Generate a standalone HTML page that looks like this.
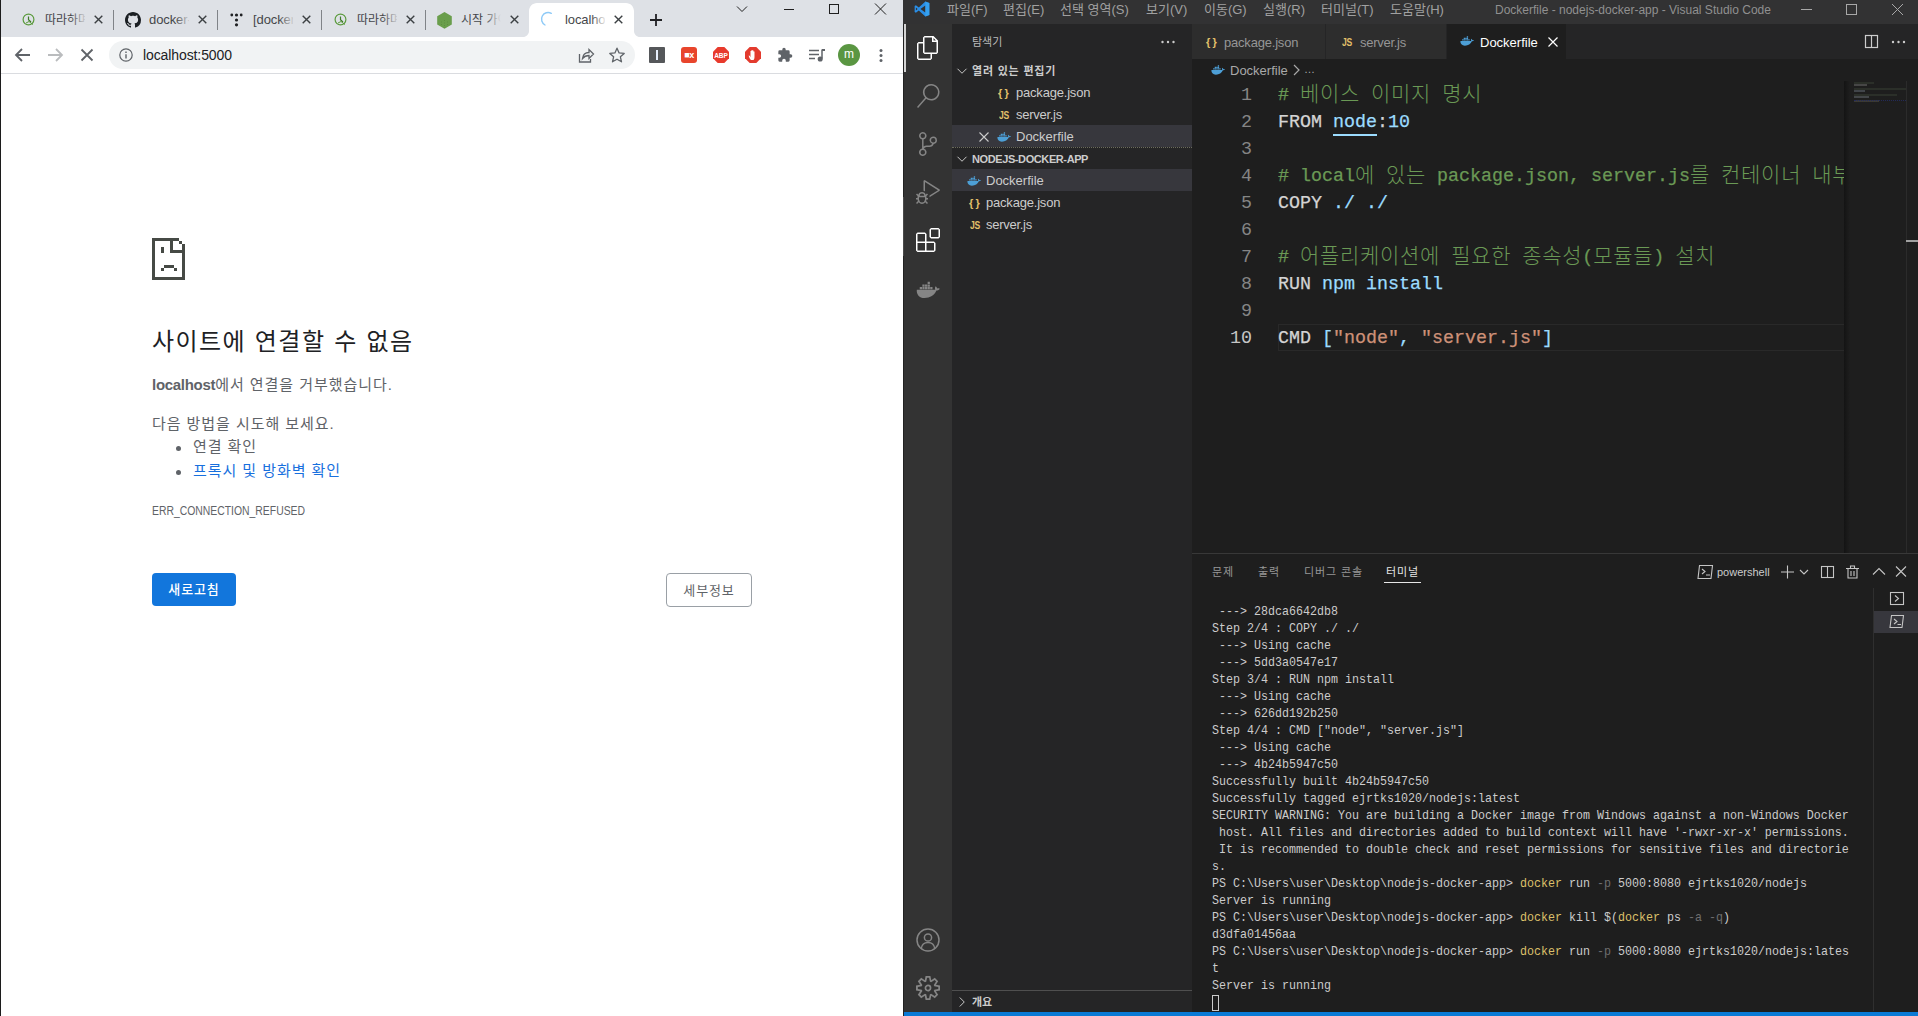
<!DOCTYPE html>
<html lang="ko">
<head>
<meta charset="utf-8">
<title>localhost</title>
<style>
*{box-sizing:border-box;margin:0;padding:0}
html,body{width:1918px;height:1016px;overflow:hidden;background:#fff}
body{position:relative;font-family:"Liberation Sans","Noto Sans CJK KR",sans-serif;font-size:13px;color:#202124}
.abs{position:absolute}
.nw{white-space:nowrap}
/* ---------- chrome ---------- */
#chrome{position:absolute;left:0;top:0;width:903px;height:1016px;background:#fff;overflow:hidden}
#chrome .edge{position:absolute;left:0;top:0;width:1px;height:1016px;background:#1c1c1c;z-index:9}
#tabstrip{position:absolute;left:0;top:0;width:903px;height:37px;background:#dee1e6}
.tab{position:absolute;top:0;height:37px;font-size:12px;color:#3c4043}
.tab .tt{position:absolute;top:12px;left:0;white-space:nowrap;overflow:hidden;height:18px;line-height:16px;color:#45474a}
.tab .fade{position:absolute;top:8px;width:16px;height:22px;background:linear-gradient(90deg,rgba(222,225,230,0),#dee1e6)}
.tsep{position:absolute;top:10px;width:1px;height:20px;background:#808388}
#acttab{position:absolute;left:527px;top:4px;width:109px;height:33px;background:#fff;border-radius:8px 8px 0 0}
#toolbar{position:absolute;left:0;top:37px;width:903px;height:37px;background:#fff;border-bottom:1px solid #dadce0}
#omni{position:absolute;left:109px;top:4px;width:526px;height:28px;border-radius:14px;background:#f1f3f4}
#omni .url{position:absolute;left:34px;top:5px;font-size:14px;line-height:18px;color:#202124;letter-spacing:-0.1px}
#page{position:absolute;left:0;top:74px;width:903px;height:942px;background:#fff;color:#5f6368}
/* ---------- vscode ---------- */
#vsc{position:absolute;left:903px;top:0;width:1015px;height:1016px;background:#222;overflow:hidden;color:#ccc;font-family:"Liberation Sans","Noto Sans CJK KR",sans-serif}
#titlebar{position:absolute;left:0;top:0;width:1015px;height:24px;background:#323233}
#actbar{position:absolute;left:1px;top:24px;width:48px;height:988px;background:#333333}
#sidebar{position:absolute;left:49px;top:24px;width:240px;height:988px;background:#252526}
#editor{position:absolute;left:289px;top:24px;width:726px;height:988px;background:#1e1e1e}
#status{position:absolute;left:1px;top:1012px;width:1014px;height:4px;background:#0a7ad6}

/* vscode detail */
#vsc .menu{position:absolute;top:0;height:23px;line-height:17px;font-size:13px;color:#a0a0a0;white-space:nowrap}
#vsc .wtitle{position:absolute;top:3px;left:592px;font-size:12px;line-height:14px;color:#909090;white-space:nowrap}
.ai{position:absolute;left:12px;width:24px;height:24px;fill:#858585}
.row{position:absolute;left:0;width:240px;height:22px;line-height:24px;font-size:13px;color:#ccc;white-space:nowrap}
.row.sel{background:#37373d}
.row span{position:absolute;top:0}
.ic{position:absolute;font-weight:bold;color:#e2c06a;font-family:"Liberation Sans",sans-serif}
.sech{position:absolute;left:0;width:240px;height:22px;line-height:22px;font-size:11px;font-weight:bold;color:#ccc;white-space:nowrap}
.etab{position:absolute;top:0;height:35px;background:#2d2d2d;font-size:13px;line-height:37px;color:#969696;white-space:nowrap;border-right:1px solid #252526}
.etab span{position:absolute;top:0}
.ln{position:absolute;left:0;width:60px;text-align:right;font:18.333px/27px "Liberation Mono",monospace;color:#858585}
.cl{position:absolute;left:86px;height:27px;white-space:pre;font:18.333px/27px "Liberation Mono","Noto Sans CJK KR",monospace;color:#d4d4d4;-webkit-text-stroke:.25px currentColor}
.cl .k{-webkit-text-stroke:0}
.cl .k{font-family:"Noto Sans CJK KR",sans-serif;font-weight:300;font-size:20px;letter-spacing:.7px;font-size:21px;line-height:10px;position:relative;top:1px}
.cm{color:#6a9955}.bl{color:#9cdcfe}.st{color:#ce9178}
.ptab{position:absolute;top:0;font-size:11px;line-height:37px;color:#969696;white-space:nowrap;letter-spacing:.9px}
#term{position:absolute;left:20px;top:49px;width:760px;font:13.333px/17px "Liberation Mono",monospace;color:#ccc;white-space:pre;transform:scaleX(.875);transform-origin:0 0}
#term .y{color:#e5c07b;color:#dcc06a}
#term .g{color:#6e6e6e}
</style>
</head>
<body>
<div id="chrome">
  <div class="edge"></div>
  <div id="tabstrip">
<svg class="abs" style="left:22px;top:13px" width="14" height="14" viewBox="0 0 14 14" fill="none" stroke="#5a9a3c" stroke-width="1.200"><circle cx="6.500" cy="6.500" r="5.400"/><path d="M6.500 3.500v3.300l2.500 2.200" stroke="#3f7a2a"/><path d="M4 10l3-1.500 4 3" stroke-width="1"/></svg>
<div class="tab" style="left:45px;width:42px"><span class="tt" style="width:40px">따라하며 배우는</span><div class="fade" style="left:26px"></div></div>
<svg class="abs" style="left:93.5px;top:15px" width="9" height="9" viewBox="0 0 9 9" stroke="#3c4043" stroke-width="1.400" fill="none"><path d="M.7.7l7.600 7.600M8.300.7L.7 8.300"/></svg>
<div class="tsep" style="left:113px"></div>
<svg class="abs" style="left:125px;top:12px" width="16" height="16" viewBox="0 0 16 16"><path fill="#1b1f23" fill-rule="evenodd" d="M8 0C3.580 0 0 3.580 0 8c0 3.540 2.290 6.530 5.470 7.590.4.070.55-.17.55-.38 0-.19-.010-.82-.010-1.490-2.010.37-2.530-.49-2.690-.94-.09-.23-.48-.94-.82-1.130-.28-.15-.68-.52-.010-.53.63-.010 1.080.58 1.230.82.720 1.210 1.870.87 2.330.66.070-.52.280-.87.510-1.070-1.780-.2-3.640-.89-3.640-3.950 0-.87.310-1.590.82-2.150-.08-.2-.36-1.020.08-2.120 0 0 .67-.21 2.200.82.640-.18 1.320-.27 2-.27s1.360.09 2 .27c1.530-1.040 2.200-.82 2.200-.82.440 1.100.16 1.920.08 2.120.51.560.82 1.270.82 2.150 0 3.070-1.870 3.750-3.650 3.950.29.250.54.730.54 1.480 0 1.070-.010 1.930-.010 2.200 0 .21.150.46.550.38A8.013 8.013 0 0 0 16 8c0-4.420-3.580-8-8-8z"/></svg>
<div class="tab" style="left:149px;width:42px"><span class="tt" style="width:40px;font-size:13px;letter-spacing:-.1px">docker-node</span><div class="fade" style="left:26px"></div></div>
<svg class="abs" style="left:197.5px;top:15px" width="9" height="9" viewBox="0 0 9 9" stroke="#3c4043" stroke-width="1.400" fill="none"><path d="M.7.7l7.600 7.600M8.300.7L.7 8.300"/></svg>
<div class="tsep" style="left:217px"></div>
<svg class="abs" style="left:230px;top:13px" width="13" height="14" viewBox="0 0 13 14" fill="#202124"><circle cx="1.800" cy="2" r="1.400"/><circle cx="6.500" cy="2" r="1.600"/><circle cx="11.200" cy="2" r="1.400"/><circle cx="6.500" cy="7" r="1.600"/><circle cx="6.500" cy="11.800" r="1.600"/></svg>
<div class="tab" style="left:253px;width:42px"><span class="tt" style="width:40px;font-size:13px;letter-spacing:-.1px">[docker] 도커</span><div class="fade" style="left:26px"></div></div>
<svg class="abs" style="left:301.5px;top:15px" width="9" height="9" viewBox="0 0 9 9" stroke="#3c4043" stroke-width="1.400" fill="none"><path d="M.7.7l7.600 7.600M8.300.7L.7 8.300"/></svg>
<div class="tsep" style="left:321px"></div>
<svg class="abs" style="left:334px;top:13px" width="14" height="14" viewBox="0 0 14 14" fill="none" stroke="#5a9a3c" stroke-width="1.200"><circle cx="6.500" cy="6.500" r="5.400"/><path d="M6.500 3.500v3.300l2.500 2.200" stroke="#3f7a2a"/><path d="M4 10l3-1.500 4 3" stroke-width="1"/></svg>
<div class="tab" style="left:357px;width:42px"><span class="tt" style="width:40px">따라하며 배우는</span><div class="fade" style="left:26px"></div></div>
<svg class="abs" style="left:405.5px;top:15px" width="9" height="9" viewBox="0 0 9 9" stroke="#3c4043" stroke-width="1.400" fill="none"><path d="M.7.7l7.600 7.600M8.300.7L.7 8.300"/></svg>
<div class="tsep" style="left:425px"></div>
<svg class="abs" style="left:437px;top:11.500px" width="15" height="17" viewBox="0 0 15 17"><path d="M7.500 0l7.300 4.200v8.400L7.500 16.800.2 12.600V4.200z" fill="#6a9e4c"/><path d="M7.500 8v8M4.500 9.500v5M10.500 9.500v5" stroke="#5a8a40" stroke-width=".8" stroke-dasharray="1 1.500"/></svg>
<div class="tab" style="left:461px;width:42px"><span class="tt" style="width:40px">시작 가이드</span><div class="fade" style="left:24px"></div></div>
<svg class="abs" style="left:509.5px;top:15px" width="9" height="9" viewBox="0 0 9 9" stroke="#3c4043" stroke-width="1.400" fill="none"><path d="M.7.7l7.600 7.600M8.300.7L.7 8.300"/></svg>
<svg class="abs" style="left:523px;top:3px" width="117" height="34" viewBox="0 0 117 34"><path d="M0 34c3.300 0 6-2.700 6-6V8c0-4.400 3.600-8 8-8h89c4.400 0 8 3.600 8 8v20c0 3.300 2.700 6 6 6z" fill="#fff"/></svg>
<svg class="abs" style="left:540px;top:11px" width="16" height="16" viewBox="0 0 16 16" fill="none" stroke="#8ecaf7" stroke-width="1.400" stroke-linecap="round"><path d="M5 14A6.600 6.600 0 0 1 11.300 2.300"/></svg>
<div class="tab" style="left:565px;width:42px"><span class="tt" style="width:40px;font-size:13px;letter-spacing:-.1px">localhost</span><div class="fade" style="left:26px;background:linear-gradient(90deg,rgba(255,255,255,0),#fff)"></div></div>
<svg class="abs" style="left:613.5px;top:15px" width="9" height="9" viewBox="0 0 9 9" stroke="#3c4043" stroke-width="1.400" fill="none"><path d="M.7.7l7.600 7.600M8.300.7L.7 8.300"/></svg>
<svg class="abs" style="left:650px;top:14px" width="12" height="12" viewBox="0 0 12 12" stroke="#202124" stroke-width="1.800" fill="none"><path d="M6 0v12M0 6h12"/></svg>
<svg class="abs" style="left:730px;top:0" width="170" height="20" viewBox="0 0 170 20" fill="none" stroke="#1f1f1f" stroke-width="1"><path d="M7 6.500l5 5 5-5"/><path d="M54 9.500h10"/><rect x="99.500" y="4.500" width="9" height="9"/><path d="M145 3.500l11 11M156 3.500l-11 11"/></svg>
</div>
  <div id="toolbar">
<svg class="abs" style="left:14px;top:10px" width="90" height="16" viewBox="0 0 90 16" fill="none" stroke="#5f6368" stroke-width="1.800"><path d="M16 8H2.500M8 2L2 8l6 6"/><path d="M34 8h13.500M42 2l6 6-6 6" stroke="#babcbe"/><path d="M67.500 2.500l11 11M78.500 2.500l-11 11"/></svg>
<div id="omni"><svg class="abs" style="left:10px;top:7px" width="14" height="14" viewBox="0 0 14 14" fill="none" stroke="#5f6368" stroke-width="1.200"><circle cx="7" cy="7" r="6.200"/><path d="M7 6.200v4.300M7 3.500v1.400" stroke-width="1.400"/></svg>
<span class="url nw">localhost:5000</span>
<svg class="abs" style="left:468px;top:5px" width="50" height="18" viewBox="0 0 50 18" fill="none" stroke="#5f6368" stroke-width="1.300"><path d="M2.500 8v8h11v-3"/><path d="M5.500 12.500c.5-4 3-6 6.500-6v-3l4.500 4.500-4.500 4.500v-3c-2.500 0-4.500.5-6.500 3z"/><path d="M40 2.200l2.100 4.700 5.100.5-3.800 3.400 1.100 5-4.500-2.600-4.500 2.600 1.100-5-3.800-3.400 5.100-.5z" stroke-linejoin="round"/></svg></div>
<div class="abs" style="left:649px;top:10px;width:16px;height:16px;background:#55575a;border-radius:1px"></div><div class="abs" style="left:656px;top:13px;width:2px;height:10px;background:#e8f0fe"></div>
<div class="abs" style="left:681px;top:10px;width:16px;height:16px;background:#e8452c;border-radius:3px;color:#fff;font:bold 9px/17px 'Liberation Sans',sans-serif;text-align:center;letter-spacing:-.5px">&#9632;x</div>
<svg class="abs" style="left:713px;top:10px" width="16" height="16" viewBox="0 0 16 16"><path d="M4.700 0h6.600L16 4.700v6.600L11.300 16H4.700L0 11.300V4.700z" fill="#e83a2c"/><text x="8" y="10.600" font-family="Liberation Sans,sans-serif" font-size="6.500" font-weight="bold" fill="#fff" text-anchor="middle">ABP</text></svg>
<svg class="abs" style="left:745px;top:10px" width="16" height="16" viewBox="0 0 16 16"><path d="M4.700 0h6.600L16 4.700v6.600L11.300 16H4.700L0 11.300V4.700z" fill="#e33b2e"/><path d="M6 13c-1.500-1.500-2-3-2.300-4.500l1 .2.800 1.500V4h1v3.500V3h1v4.500V3.500h1v4V4.500h1V10c0 1.500-.5 2.500-1 3z" fill="#fff"/></svg>
<svg class="abs" style="left:777px;top:10px" width="16" height="16" viewBox="0 0 24 24"><path fill="#5f6368" d="M20.500 11H19V7a2 2 0 0 0-2-2h-4V3.500a2.500 2.500 0 0 0-5 0V5H4a2 2 0 0 0-2 2v3.800h1.500a2.700 2.700 0 0 1 0 5.400H2V20a2 2 0 0 0 2 2h3.800v-1.500a2.700 2.700 0 0 1 5.400 0V22H17a2 2 0 0 0 2-2v-4h1.500a2.500 2.500 0 0 0 0-5z"/></svg>
<svg class="abs" style="left:808px;top:10px" width="17" height="16" viewBox="0 0 17 16" fill="none" stroke="#5f6368" stroke-width="1.500"><path d="M1 3.500h10M1 7.500h10M1 11.500h6"/><path d="M14 2.500v9" /><circle cx="12.200" cy="12" r="1.800" fill="#5f6368"/><path d="M14 3h3" stroke-width="2"/></svg>
<div class="abs" style="left:838px;top:7px;width:22px;height:22px;border-radius:11px;background:#5a9642;color:#fff;font:12px/21px 'Liberation Sans',sans-serif;text-align:center">m</div>
<svg class="abs" style="left:879px;top:11px" width="4" height="16" viewBox="0 0 4 16" fill="#5f6368"><circle cx="2" cy="2.500" r="1.500"/><circle cx="2" cy="7.500" r="1.500"/><circle cx="2" cy="12.500" r="1.500"/></svg>
</div>
  <div id="page">
<svg class="abs" style="left:152px;top:164px" width="33" height="42" viewBox="0 0 33 42" fill="#464a45" shape-rendering="crispEdges"><rect x="0" y="0" width="27" height="3"/><rect x="0" y="0" width="3" height="42"/><rect x="0" y="39" width="33" height="3"/><rect x="30" y="6" width="3" height="36"/><rect x="27" y="3" width="3" height="3"/><rect x="18" y="3" width="3" height="12"/><rect x="18" y="12" width="13" height="3"/><rect x="9" y="9" width="3" height="6"/><rect x="12" y="27" width="10" height="3"/><rect x="9" y="30" width="3" height="3"/><rect x="22" y="30" width="3" height="3"/></svg>
<h1 class="abs nw" style="left:152px;top:250px;font-size:24px;font-weight:normal;line-height:36px;color:#202124;letter-spacing:1.450px;word-spacing:.6px">사이트에 연결할 수 없음</h1>
<p class="abs nw" style="left:152px;top:299px;font-size:15px;line-height:24px;letter-spacing:.95px"><b style="letter-spacing:-.29px;color:#5f6368">localhost</b>에서 연결을 거부했습니다.</p>
<p class="abs nw" style="left:152px;top:337.500px;font-size:15px;line-height:24px;letter-spacing:.95px">다음 방법을 시도해 보세요.</p>
<div class="abs" style="left:176px;top:372px;width:5px;height:5px;border-radius:3px;background:#5f6368"></div>
<p class="abs nw" style="left:193px;top:361px;font-size:15px;line-height:24px;letter-spacing:.95px">연결 확인</p>
<div class="abs" style="left:176px;top:396px;width:5px;height:5px;border-radius:3px;background:#5f6368"></div>
<p class="abs nw" style="left:193px;top:385px;font-size:15px;line-height:24px;letter-spacing:.95px;color:#1870de">프록시 및 방화벽 확인</p>
<p class="abs nw" style="left:152px;top:429px;font-size:12px;line-height:16px;color:#5f6368;transform:scaleX(.866);transform-origin:0 0">ERR_CONNECTION_REFUSED</p>
<div class="abs nw" style="left:152px;top:499px;width:84px;height:33px;border-radius:4px;background:#1276dc;color:#fff;font-size:13px;line-height:33px;text-align:center;font-weight:500;letter-spacing:.9px">새로고침</div>
<div class="abs nw" style="left:666px;top:499px;width:86px;height:34px;border-radius:4px;background:#fff;border:1px solid #9aa0a6;color:#5f6368;font-size:13px;line-height:33px;text-align:center;letter-spacing:.9px">세부정보</div>
</div>
</div>
<div id="vsc">
  <div class="abs" style="left:0;top:197px;width:1px;height:59px;background:#4a4a4a;z-index:5"></div><div id="titlebar">
<svg class="abs" style="left:11px;top:1px" width="16" height="16" viewBox="0 0 100 100"><path d="M71 3 30 41 12 27 4 31v38l8 4 18-14 41 38 25-10V13zM12 60V40l11 10zm59 12L40 50l31-22z" fill="#2a8ee6"/><path d="M71 3l25 10v74L71 97z" fill="#3aa6f2" opacity=".75"/></svg>
<span class="menu" style="left:44px;top:1px">파일(F)</span>
<span class="menu" style="left:100px;top:1px">편집(E)</span>
<span class="menu" style="left:157px;top:1px">선택 영역(S)</span>
<span class="menu" style="left:243px;top:1px">보기(V)</span>
<span class="menu" style="left:301px;top:1px">이동(G)</span>
<span class="menu" style="left:360px;top:1px">실행(R)</span>
<span class="menu" style="left:418px;top:1px">터미널(T)</span>
<span class="menu" style="left:487px;top:1px">도움말(H)</span>
<span class="wtitle">Dockerfile - nodejs-docker-app - Visual Studio Code</span>
<svg class="abs" style="left:890px;top:0" width="125" height="23" viewBox="0 0 125 23" fill="none" stroke="#a8a8a8" stroke-width="1"><path d="M8 9.5h11"/><rect x="53.5" y="4.500" width="10" height="10"/><path d="M99 4l11 11M110 4L99 15"/></svg>
</div>
  <div id="actbar">
<div class="abs" style="left:0;top:0;width:2px;height:48px;background:#d4d4d4"></div>
<svg class="ai" style="top:12px;fill:#fff" viewBox="0 0 24 24"><path d="M17.500 0h-9L7 1.500V6H2.500L1 7.500v15.070L2.500 24h12.070L16 22.570V18h4.700l1.300-1.430V4.500L17.500 0zm0 2.120l2.380 2.380H17.500V2.120zm-3 20.380h-12v-15H7v9.070L8.500 18h6v4.500zm6-6h-12v-15H16V6h4.500v10.500z"/></svg>
<svg class="ai" style="top:60px" viewBox="0 0 24 24"><path d="M15.250 0a8.250 8.250 0 0 0-6.180 13.720L1 22.880l1.120 1 8.050-9.120A8.251 8.251 0 1 0 15.250.010V0zm0 15a6.750 6.750 0 1 1 0-13.500 6.750 6.750 0 0 1 0 13.500z"/></svg>
<svg class="ai" style="top:108px" viewBox="0 0 24 24"><path d="M21.007 8.222A3.738 3.738 0 0 0 15.045 5.200a3.737 3.737 0 0 0 1.156 6.583 2.988 2.988 0 0 1-2.668 1.670h-2.990a4.456 4.456 0 0 0-2.989 1.165V7.400a3.737 3.737 0 1 0-1.494 0v9.117a3.776 3.776 0 1 0 1.816.099 2.990 2.990 0 0 1 2.668-1.667h2.990a4.484 4.484 0 0 0 4.223-3.039 3.736 3.736 0 0 0 3.250-3.687zM4.565 3.738a2.242 2.242 0 1 1 4.484 0 2.242 2.242 0 0 1-4.484 0zm4.484 16.441a2.242 2.242 0 1 1-4.484 0 2.242 2.242 0 0 1 4.484 0zm8.221-9.715a2.242 2.242 0 1 1 0-4.485 2.242 2.242 0 0 1 0 4.485z"/></svg>
<svg class="ai" style="top:156px" viewBox="0 0 24 24"><path d="M10.940 13.500l-1.320 1.320a3.730 3.730 0 0 0-7.240 0L1.060 13.500 0 14.560l1.720 1.720-.22.22V18H0v1.500h1.500v.08c.077.489.214.966.410 1.420L0 22.940 1.060 24l1.650-1.650A4.308 4.308 0 0 0 6 24a4.310 4.310 0 0 0 3.290-1.650L10.940 24 12 22.940 10.090 21c.198-.464.336-.951.410-1.450v-.1H12V18h-1.500v-1.500l-.22-.22L12 14.560l-1.060-1.060zM6 13.500a2.250 2.250 0 0 1 2.250 2.250h-4.500A2.250 2.250 0 0 1 6 13.500zm3 6a3.330 3.330 0 0 1-3 3 3.330 3.330 0 0 1-3-3v-2.250h6v2.250zm14.760-9.900v1.260L13.500 17.370V15.600l8.500-5.370L9 2v9.460a5.070 5.070 0 0 0-1.500-.72V.630L8.640 0l15.120 9.600z"/></svg>
<svg class="ai" style="top:204px;fill:#fff" viewBox="0 0 24 24"><path fill-rule="evenodd" d="M13.500 1.500L15 0h7.500L24 1.500V9l-1.500 1.500H15L13.500 9V1.500zm1.500 0V9h7.500V1.500H15zM0 15V6l1.500-1.500H9L10.500 6v7.500H18l1.500 1.500v7.500L18 24H1.500L0 22.500V15zm9-1.500V6H1.500v7.500H9zM9 15H1.500v7.500H9V15zm1.500 7.500H18V15h-7.500v7.500z"/></svg>
<svg class="ai" style="top:254px;left:12px;width:24px;height:24px" viewBox="0 0 32 32"><path d="M3 16.500h25.500c.8-.1 2.600-.9 3.100-2.200-.9-.6-2.600-.6-3.500-.2-.1-1.300-.9-2.400-1.800-3.100-1.200 1.300-1.300 3.200-.6 4.300-.5.3-1.400.5-2 .5H1.100c-.4 2.400.3 5.500 2.200 7.700 1.800 2.100 4.400 3.200 8 3.200 7.600 0 13.200-3.500 15.900-9.900H3zM5 12h3v3H5zm3.500 0h3v3h-3zM12 12h3v3h-3zm3.500 0h3v3h-3zM8.500 8.500h3v3h-3zm3.500 0h3v3h-3zm3.500 0h3v3h-3zm0-3.500h3v3h-3zm3.500 7h3v3H19z"/></svg>
<svg class="ai" style="top:904px;fill:none" viewBox="0 0 24 24" stroke="#858585" stroke-width="1.500"><circle cx="12" cy="12" r="11"/><circle cx="12" cy="9.500" r="3.600"/><path d="M5.200 20.500c.6-3.800 3.300-6 6.800-6s6.200 2.200 6.800 6"/></svg>
<svg class="ai" style="top:952px" viewBox="0 0 24 24"><path fill-rule="evenodd" d="M19.850 8.750l4.150.83v4.840l-4.150.83 2.350 3.520-3.430 3.430-3.520-2.350-.83 4.150H9.580l-.83-4.150-3.520 2.350-3.430-3.430 2.350-3.520L0 14.420V9.580l4.150-.83L1.800 5.230 5.230 1.800l3.520 2.350L9.580 0h4.840l.83 4.150 3.520-2.350 3.430 3.430-2.350 3.520zm-1.570 5.070l4-.81v-2l-4-.81-.54-1.300 2.290-3.430-1.430-1.430-3.430 2.290-1.300-.54-.81-4h-2l-.81 4-1.300.54-3.430-2.290-1.430 1.430L6.380 8.900l-.54 1.300-4 .81v2l4 .81.54 1.300-2.290 3.430 1.430 1.430 3.430-2.290 1.300.54.81 4h2l.81-4 1.300-.54 3.430 2.290 1.430-1.430-2.290-3.430.54-1.300zm-8.186-4.672A3.430 3.430 0 0 1 12 8.570 3.440 3.440 0 0 1 15.430 12a3.430 3.430 0 1 1-5.336-2.852zm.956 4.274c.281.188.612.288.950.288A1.700 1.700 0 0 0 13.710 12a1.710 1.710 0 1 0-2.660 1.422z"/></svg>
</div>
  <div id="sidebar">
<span class="abs nw" style="left:20px;top:1px;line-height:35px;font-size:11px;color:#bbb">탐색기</span>
<svg class="abs" style="left:208px;top:15px" width="16" height="6" viewBox="0 0 16 6" fill="#ccc"><circle cx="2.500" cy="3" r="1.200"/><circle cx="8" cy="3" r="1.200"/><circle cx="13.500" cy="3" r="1.200"/></svg>
<div class="sech" style="top:36px"><svg class="abs" style="left:4px;top:5px" width="12" height="12" viewBox="0 0 16 16" fill="none" stroke="#ccc" stroke-width="1.300"><path d="M2 5l6 6 6-6"/></svg><span class="abs" style="left:20px;letter-spacing:.8px">열려 있는 편집기</span></div>
<div class="row" style="top:57px"><span class="ic" style="left:46px;font-size:11px">{&thinsp;}</span><span style="left:64px;letter-spacing:-.2px">package.json</span></div>
<div class="row" style="top:79px"><span class="ic" style="left:47px;font-size:11px;transform:scaleX(.78);transform-origin:0 50%;letter-spacing:-.3px">JS</span><span style="left:64px;letter-spacing:-.27px">server.js</span></div>
<div class="row sel" style="top:101px"><svg class="abs" style="left:27px;top:7px" width="10" height="10" viewBox="0 0 10 10" stroke="#ccc" stroke-width="1.100" fill="none"><path d="M.5.5l9 9M9.500.5l-9 9"/></svg><svg class="abs" style="left:45px;top:5px" width="14" height="14" viewBox="0 0 32 32"><path fill="#4d9fd6" d="M3 16.5h25.5c.8-.1 2.6-.9 3.1-2.2-.9-.6-2.600-.6-3.500-.2-.1-1.300-.9-2.400-1.800-3.100-1.200 1.300-1.300 3.200-.6 4.300-.5.300-1.400.500-2 .5H1.100c-.4 2.400.3 5.500 2.200 7.700 1.800 2.100 4.400 3.200 8 3.200 7.600 0 13.200-3.500 15.900-9.900H3zM5 12h3v3H5zm3.500 0h3v3h-3zM12 12h3v3h-3zm3.500 0h3v3h-3zM8.500 8.500h3v3h-3zm3.500 0h3v3h-3zm3.500 0h3v3h-3zm0-3.500h3v3h-3zm3.500 7h3v3H19z"/></svg><span style="left:64px">Dockerfile</span></div>
<div class="abs" style="left:0;top:123px;width:240px;height:0;border-top:1px dotted #6b6b5c"></div><div class="sech" style="top:124px"><svg class="abs" style="left:4px;top:5px" width="12" height="12" viewBox="0 0 16 16" fill="none" stroke="#ccc" stroke-width="1.300"><path d="M2 5l6 6 6-6"/></svg><span class="abs" style="left:20px;letter-spacing:-.4px">NODEJS-DOCKER-APP</span></div>
<div class="row sel" style="top:145px"><svg class="abs" style="left:15px;top:5px" width="14" height="14" viewBox="0 0 32 32"><path fill="#4d9fd6" d="M3 16.5h25.5c.8-.1 2.6-.9 3.1-2.2-.9-.6-2.600-.6-3.500-.2-.1-1.300-.9-2.400-1.800-3.100-1.200 1.300-1.300 3.200-.6 4.300-.5.300-1.400.500-2 .5H1.100c-.4 2.400.3 5.500 2.200 7.700 1.800 2.100 4.400 3.200 8 3.200 7.600 0 13.200-3.500 15.900-9.900H3zM5 12h3v3H5zm3.500 0h3v3h-3zM12 12h3v3h-3zm3.500 0h3v3h-3zM8.500 8.500h3v3h-3zm3.500 0h3v3h-3zm3.500 0h3v3h-3zm0-3.500h3v3h-3zm3.500 7h3v3H19z"/></svg><span style="left:34px">Dockerfile</span></div>
<div class="row" style="top:167px"><span class="ic" style="left:17px;font-size:11px">{&thinsp;}</span><span style="left:34px;letter-spacing:-.2px">package.json</span></div>
<div class="row" style="top:189px"><span class="ic" style="left:18px;font-size:11px;transform:scaleX(.78);transform-origin:0 50%;letter-spacing:-.3px">JS</span><span style="left:34px;letter-spacing:-.27px">server.js</span></div>
<div class="abs" style="left:0;top:966px;width:240px;height:1px;background:#4f4f4f"></div>
<div class="sech" style="top:967px"><svg class="abs" style="left:4px;top:5px" width="12" height="12" viewBox="0 0 16 16" fill="none" stroke="#ccc" stroke-width="1.300"><path d="M5 2l6 6-6 6"/></svg><span class="abs" style="left:20px">개요</span></div>
</div>
  <div id="editor">
<div class="abs" style="left:0;top:0;width:726px;height:35px;background:#252526"></div>
<div class="etab" style="left:0;top:0;width:134px"><span class="ic" style="left:14px;font-size:11px">{&thinsp;}</span><span style="left:32px;letter-spacing:-.2px">package.json</span></div>
<div class="etab" style="left:134px;top:0;width:121px"><span class="ic" style="left:16px;font-size:11px;transform:scaleX(.78);transform-origin:0 50%;letter-spacing:-.3px">JS</span><span style="left:34px;letter-spacing:-.27px">server.js</span></div>
<div class="etab" style="left:255px;top:0;width:120px;background:#1e1e1e;color:#fff"><svg class="abs" style="left:13px;top:10px" width="14" height="14" viewBox="0 0 32 32"><path fill="#4d9fd6" d="M3 16.500h25.500c.8-.1 2.600-.9 3.100-2.200-.9-.6-2.600-.6-3.500-.2-.1-1.300-.9-2.400-1.800-3.100-1.200 1.300-1.300 3.200-.6 4.300-.5.3-1.400.5-2 .5H1.100c-.4 2.400.3 5.500 2.200 7.700 1.800 2.100 4.400 3.200 8 3.200 7.600 0 13.200-3.500 15.900-9.900H3zM5 12h3v3H5zm3.500 0h3v3h-3zM12 12h3v3h-3zm3.500 0h3v3h-3zM8.500 8.500h3v3h-3zm3.500 0h3v3h-3zm3.500 0h3v3h-3zm0-3.500h3v3h-3zm3.500 7h3v3H19z"/></svg><span style="left:33px">Dockerfile</span><svg class="abs" style="left:101px;top:13px" width="10" height="10" viewBox="0 0 10 10" stroke="#fff" stroke-width="1.200" fill="none"><path d="M.5.5l9 9M9.500.5l-9 9"/></svg></div>
<svg class="abs" style="left:672px;top:10px" width="44" height="16" viewBox="0 0 44 16" fill="none" stroke="#ccc" stroke-width="1.200"><rect x="1.500" y="1.500" width="12" height="12"/><path d="M7.500 1.500v12"/><g fill="#ccc" stroke="none"><circle cx="29" cy="8" r="1.200"/><circle cx="34.500" cy="8" r="1.200"/><circle cx="40" cy="8" r="1.200"/></g></svg>
<div class="abs nw" style="left:0;top:35px;width:726px;height:22px;line-height:23px;font-size:13px;color:#a9a9a9"><svg class="abs" style="left:19px;top:4px" width="14" height="14" viewBox="0 0 32 32"><path fill="#4d9fd6" d="M3 16.500h25.500c.8-.1 2.600-.9 3.100-2.200-.9-.6-2.600-.6-3.500-.2-.1-1.300-.9-2.400-1.800-3.100-1.200 1.300-1.300 3.200-.6 4.300-.5.3-1.400.5-2 .5H1.100c-.4 2.400.3 5.500 2.200 7.700 1.800 2.100 4.400 3.200 8 3.200 7.600 0 13.200-3.500 15.900-9.900H3zM5 12h3v3H5zm3.500 0h3v3h-3zM12 12h3v3h-3zm3.500 0h3v3h-3zM8.500 8.500h3v3h-3zm3.500 0h3v3h-3zm3.500 0h3v3h-3zm0-3.500h3v3h-3zm3.500 7h3v3H19z"/></svg><span class="abs" style="left:38px">Dockerfile</span><svg class="abs" style="left:100px;top:5px" width="10" height="12" viewBox="0 0 10 12" fill="none" stroke="#a9a9a9" stroke-width="1.200"><path d="M2 1l5 5-5 5"/></svg><span class="abs" style="left:112px;top:-1px;font-size:11px;letter-spacing:-.5px">…</span></div>
<div id="code" class="abs" style="left:0;top:0;width:652px;height:530px;overflow:hidden">
<div class="abs" style="left:86px;top:300px;width:570px;height:27px;border:1px solid #292929"></div>
<div class="ln" style="top:58px">1</div><div class="cl" style="top:58px"><span class="cm"># <span class="k">베이스</span> <span class="k">이미지</span> <span class="k">명시</span></span></div>
<div class="ln" style="top:85px">2</div><div class="cl" style="top:85px">FROM <span class="bl" style="text-decoration:underline;text-underline-offset:7px;text-decoration-thickness:1.500px">node</span>:<span class="bl">10</span></div>
<div class="ln" style="top:112px">3</div><div class="cl" style="top:112px"></div>
<div class="ln" style="top:139px">4</div><div class="cl" style="top:139px"><span class="cm"># local<span class="k">에</span> <span class="k">있는</span> package.json, server.js<span class="k">를</span> <span class="k">컨테이너</span> <span class="k">내부에</span> <span class="k">복사</span></span></div>
<div class="ln" style="top:166px">5</div><div class="cl" style="top:166px">COPY <span class="bl">./ ./</span></div>
<div class="ln" style="top:193px">6</div><div class="cl" style="top:193px"></div>
<div class="ln" style="top:220px">7</div><div class="cl" style="top:220px"><span class="cm"># <span class="k">어플리케이션에</span> <span class="k">필요한</span> <span class="k">종속성</span>(<span class="k">모듈들</span>) <span class="k">설치</span></span></div>
<div class="ln" style="top:247px">8</div><div class="cl" style="top:247px">RUN <span class="bl">npm install</span></div>
<div class="ln" style="top:274px">9</div><div class="cl" style="top:274px"></div>
<div class="ln" style="color:#c6c6c6;top:301px">10</div><div class="cl" style="top:301px">CMD <span class="bl">[</span><span class="st">"node"</span><span class="bl">,</span> <span class="st">"server.js"</span><span class="bl">]</span></div>

</div>
<div class="abs" style="left:652px;top:57px;width:6px;height:472px;background:linear-gradient(90deg,rgba(0,0,0,.35),rgba(0,0,0,0))"></div>
<div id="minimap" class="abs" style="left:660px;top:57px;width:54px;height:30px;opacity:.45"><div class="abs" style="left:2px;top:0.5px;width:20px;height:2px;background:#3b4438"></div><div class="abs" style="left:2px;top:2.5px;width:12.5px;height:2px;background:#777"></div><div class="abs" style="left:2px;top:6.5px;width:52px;height:2px;background:#3b4438"></div><div class="abs" style="left:2px;top:8.5px;width:10.5px;height:2px;background:#6c7680"></div><div class="abs" style="left:2px;top:12.5px;width:43px;height:2px;background:#3b4438"></div><div class="abs" style="left:2px;top:14.5px;width:15px;height:2px;background:#70787f"></div><div class="abs" style="left:2px;top:18.5px;width:25px;height:2px;background:#5c5a50"></div><div class="abs" style="left:2px;top:19px;width:52px;height:1px;border-bottom:1px dotted #2b3aa0"></div></div>
<div class="abs" style="left:714px;top:57px;width:1px;height:472px;background:#2b2b2b"></div>
<div class="abs" style="left:714px;top:216px;width:12px;height:2px;background:#a0a0a0"></div>
<div id="panel" class="abs" style="left:0;top:529px;width:726px;height:457px;border-top:1px solid #383838">
<span class="ptab" style="left:20px">문제</span>
<span class="ptab" style="left:66px">출력</span>
<span class="ptab" style="left:112px">디버그 콘솔</span>
<span class="ptab" style="left:194px;color:#e7e7e7">터미널</span>
<div class="abs" style="left:192px;top:28px;width:37px;height:1px;background:#e7e7e7"></div>
<svg class="abs" style="left:505px;top:10px" width="18" height="16" viewBox="0 0 18 16" fill="none" stroke="#c5c5c5" stroke-width="1.100"><path d="M2.500 1.500h13l-1.500 13h-13z"/><path d="M5 5l3 2.500-3 2.500M9 11h4"/></svg>
<span class="abs nw" style="left:525px;top:0;line-height:37px;font-size:11px;color:#ccc">powershell</span>
<svg class="abs" style="left:588px;top:10px" width="130" height="16" viewBox="0 0 130 16" fill="none" stroke="#c5c5c5" stroke-width="1.100"><path d="M7.500 1.500v13M1 8h13"/><path d="M20 6l4 4 4-4"/><rect x="41.500" y="2.500" width="12" height="11"/><path d="M47.500 2.500v11"/><path d="M66 4.500h13M68 4.500v9.500h9v-9.500M70.500 4v-2h4v2M71 7v5M74 7v5"/><path d="M93 10.500l6-6 6 6"/><path d="M116 2.500l10 10M126 2.500l-10 10"/></svg>
<div id="term"> ---&gt; 28dca6642db8
Step 2/4 : COPY ./ ./
 ---&gt; Using cache
 ---&gt; 5dd3a0547e17
Step 3/4 : RUN npm install
 ---&gt; Using cache
 ---&gt; 626dd192b250
Step 4/4 : CMD ["node", "server.js"]
 ---&gt; Using cache
 ---&gt; 4b24b5947c50
Successfully built 4b24b5947c50
Successfully tagged ejrtks1020/nodejs:latest
SECURITY WARNING: You are building a Docker image from Windows against a non-Windows Docker
 host. All files and directories added to build context will have '-rwxr-xr-x' permissions.
 It is recommended to double check and reset permissions for sensitive files and directorie
s.
PS C:\Users\user\Desktop\nodejs-docker-app&gt; <span class="y">docker</span> run <span class="g">-p</span> 5000:8080 ejrtks1020/nodejs
Server is running
PS C:\Users\user\Desktop\nodejs-docker-app&gt; <span class="y">docker</span> kill $(<span class="y">docker</span> ps <span class="g">-a</span> <span class="g">-q</span>)
d3dfa01456aa
PS C:\Users\user\Desktop\nodejs-docker-app&gt; <span class="y">docker</span> run <span class="g">-p</span> 5000:8080 ejrtks1020/nodejs:lates
t
Server is running
</div>
<div class="abs" style="left:20px;top:441px;width:7px;height:16px;border:1px solid #ccc"></div>
<div class="abs" style="left:681px;top:34px;width:1px;height:423px;background:#2f2f2f"></div>
<div class="abs" style="left:682px;top:57px;width:44px;height:22px;background:#37373d"></div>
<svg class="abs" style="left:697px;top:37px" width="16" height="40" viewBox="0 0 16 40" fill="none" stroke="#c5c5c5" stroke-width="1.100"><rect x="1.500" y="1.500" width="13" height="12"/><path d="M6 4.500l3.500 3-3.500 3"/><path d="M2.500 24.500h12l-1.500 12h-12z"/><path d="M5 28l3 2.500-3 2.500M8.500 33.500h3.500"/></svg>
</div>
</div>
  <div id="status"></div>
</div>
</body>
</html>
